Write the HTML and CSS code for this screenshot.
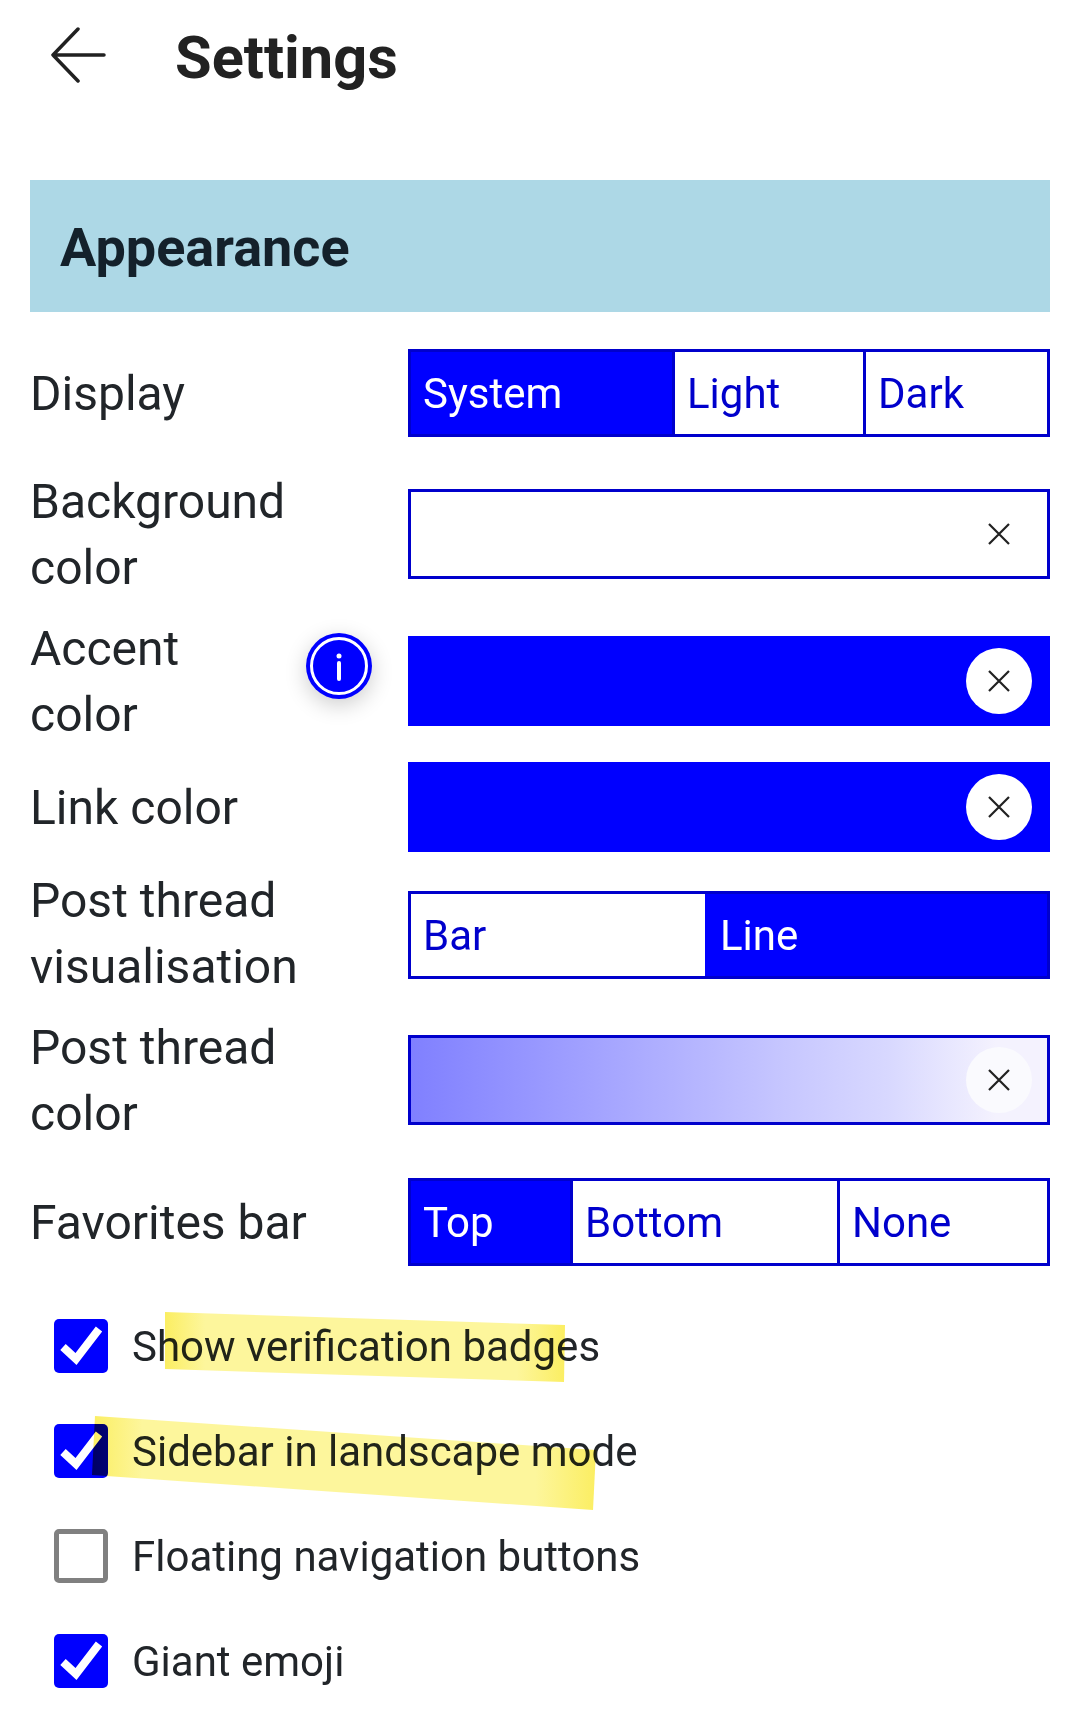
FILE: index.html
```html
<!DOCTYPE html>
<html lang="en">
<head>
    <meta charset="UTF-8">
    <meta name="viewport" content="width=device-width, initial-scale=1.0">
    <title>Settings</title>
    <link rel="stylesheet" href="styles.css">
</head>
<body>
    <header class="top-bar">
        <svg class="back-icon" width="58" height="58" viewBox="0 0 58 58">
            <path d="M54 28H3M28 2 3 28l25 26" />
        </svg>
        <h1>Settings</h1>
    </header>

    <h2 class="section-title">Appearance</h2>

    <div class="settings">
        <div class="setting">
            <span class="setting-label">Display</span>
            <div class="segments">
                <button class="segment active seg-system">System</button>
                <button class="segment seg-light">Light</button>
                <button class="segment seg-dark">Dark</button>
            </div>
        </div>
        <div class="setting">
            <span class="setting-label">Background<br>color</span>
            <div class="color-input">
                <span class="clear-button"><svg viewBox="0 0 24 24"><path d="M2 2l20 20M22 2 2 22" /></svg></span>
            </div>
        </div>
        <div class="setting">
            <span class="setting-label">Accent<br>color</span>
            <span class="info-badge">
                <svg viewBox="0 0 66 66">
                    <circle cx="33" cy="33" r="27.5" />
                    <path d="M33 30v16" />
                    <circle class="info-dot" cx="33" cy="23" r="2.5" />
                </svg>
            </span>
            <div class="color-input filled">
                <span class="clear-button"><svg viewBox="0 0 24 24"><path d="M2 2l20 20M22 2 2 22" /></svg></span>
            </div>
        </div>
        <div class="setting">
            <span class="setting-label">Link color</span>
            <div class="color-input filled">
                <span class="clear-button"><svg viewBox="0 0 24 24"><path d="M2 2l20 20M22 2 2 22" /></svg></span>
            </div>
        </div>
        <div class="setting">
            <span class="setting-label">Post thread<br>visualisation</span>
            <div class="segments segments-low">
                <button class="segment seg-bar">Bar</button>
                <button class="segment active seg-line">Line</button>
            </div>
        </div>
        <div class="setting">
            <span class="setting-label">Post thread<br>color</span>
            <div class="color-input faded">
                <span class="clear-button"><svg viewBox="0 0 24 24"><path d="M2 2l20 20M22 2 2 22" /></svg></span>
            </div>
        </div>
        <div class="setting">
            <span class="setting-label">Favorites bar</span>
            <div class="segments">
                <button class="segment active seg-top">Top</button>
                <button class="segment seg-bottom">Bottom</button>
                <button class="segment seg-none">None</button>
            </div>
        </div>
    </div>

    <div class="checks">
        <label class="check-row">
            <span class="check-box checked"><svg viewBox="0 0 54 54"><path d="M9 28l13 12 23-30" /></svg></span>
            Show verification badges
        </label>
        <label class="check-row">
            <span class="check-box checked"><svg viewBox="0 0 54 54"><path d="M9 28l13 12 23-30" /></svg></span>
            Sidebar in landscape mode
        </label>
        <label class="check-row">
            <span class="check-box"></span>
            Floating navigation buttons
        </label>
        <label class="check-row">
            <span class="check-box checked"><svg viewBox="0 0 54 54"><path d="M9 28l13 12 23-30" /></svg></span>
            Giant emoji
        </label>
    </div>

    <!-- marker strokes drawn over the screenshot -->
    <svg class="marker" width="1080" height="1719" viewBox="0 0 1080 1719">
        <defs>
            <linearGradient id="marker-ink" x1="0" x2="1" y1="0" y2="0">
                <stop offset="0" stop-color="#fbee62" />
                <stop offset="0.1" stop-color="#fdf69c" />
                <stop offset="0.88" stop-color="#fdf69c" />
                <stop offset="1" stop-color="#fbee62" />
            </linearGradient>
        </defs>
        <polygon fill="url(#marker-ink)" points="165,1312 565,1325 564,1382 165,1369" />
        <polygon fill="url(#marker-ink)" points="95,1416 596,1450 593,1510 92,1475" />
    </svg>
</body>
</html>
```

FILE: styles.css
```css
:root {
    --blue: #0000ff;
    --blue-line: #0000cc;
    --text: #212529;
}

* {
    box-sizing: border-box;
}

body {
    font-family: Roboto, "Liberation Sans", sans-serif;
    background-color: #fff;
    color: var(--text);
    margin: 0;
    padding: 0 30px;
    height: 1719px;
    overflow: hidden;
    position: relative;
}

.top-bar {
    display: flex;
    align-items: center;
    height: 112px;
    padding-left: 20px;
    gap: 67px;
}

.back-icon path {
    fill: none;
    stroke: #212121;
    stroke-width: 3.5;
    stroke-linecap: round;
    stroke-linejoin: round;
}

h1 {
    font-size: 59.5px;
    font-weight: 700;
    margin: 3px 0 0;
    color: #222;
}

.section-title {
    font-size: 54px;
    font-weight: 700;
    margin: 68px 0 0;
    height: 132px;
    line-height: 136px;
    padding-left: 30px;
    background-color: #add8e6;
    color: #14212b;
}

.settings {
    display: flex;
    flex-direction: column;
    gap: 15px;
    margin-top: 20px;
}

.setting {
    display: flex;
    align-items: center;
    justify-content: space-between;
    min-height: 90px;
}

.setting-label {
    font-size: 48px;
    line-height: 66px;
    padding-top: 1px;
    margin: 0 auto -1px 0;
}

.info-badge {
    width: 66px;
    height: 66px;
    border-radius: 50%;
    background: var(--blue);
    box-shadow: 0 6px 22px rgba(0, 0, 0, 0.2);
    margin-right: 36px;
    margin-bottom: 30px;
}

.info-badge svg {
    display: block;
}

.info-badge circle {
    fill: none;
    stroke: #fff;
    stroke-width: 3;
}

.info-badge path {
    stroke: #fff;
    stroke-width: 4;
    stroke-linecap: round;
}

.info-badge .info-dot {
    fill: #fff;
    stroke: none;
}

.segments {
    display: flex;
    width: 642px;
    height: 88px;
    margin: 17px 0 16px;
    border: 3px solid var(--blue-line);
}

.segments-low {
    margin-top: 20px;
}

.segment {
    font-family: Roboto, "Liberation Sans", sans-serif;
    font-size: 42px;
    text-align: left;
    padding: 0 0 0 12px;
    background: #fff;
    color: var(--blue-line);
    border: none;
    border-left: 3px solid var(--blue-line);
}

.segment:first-child {
    border-left: none;
}

.segment.active {
    background: var(--blue);
    color: #fff;
    border-color: var(--blue);
}

.seg-system { width: 261px; }
.seg-light { width: 191px; }
.seg-dark { width: 184px; }
.seg-bar { width: 294px; }
.seg-line { width: 342px; }
.seg-top { width: 159px; }
.seg-bottom { width: 267px; }
.seg-none { width: 210px; }

.color-input {
    display: flex;
    align-items: center;
    justify-content: flex-end;
    width: 642px;
    height: 90px;
    padding-right: 15px;
    border: 3px solid var(--blue-line);
    background: #fff;
}

.color-input.filled {
    background: var(--blue);
    border-color: var(--blue);
}

.color-input.faded {
    background: linear-gradient(to right, #8080ff, #c8c8ff 60%, #d8d8ff 75%, #f4f2fe 92%);
}

.clear-button {
    display: flex;
    align-items: center;
    justify-content: center;
    width: 66px;
    height: 66px;
    border-radius: 50%;
}

.filled .clear-button {
    background: #fff;
}

.faded .clear-button {
    background: #fafafe;
}

.clear-button svg {
    width: 24px;
    height: 24px;
}

.clear-button path {
    fill: none;
    stroke: #212121;
    stroke-width: 2.2;
}

.checks {
    display: flex;
    flex-direction: column;
    gap: 51px;
    margin: 37px 0 0 24px;
}

.check-row {
    display: flex;
    align-items: center;
    gap: 24px;
    height: 54px;
    font-size: 42px;
}

.check-box {
    width: 54px;
    height: 54px;
    border-radius: 5px;
    border: 5px solid #808080;
    flex-shrink: 0;
}

.check-box.checked {
    background: var(--blue);
    border: none;
}

.check-box svg {
    display: block;
}

.check-box path {
    fill: none;
    stroke: #fff;
    stroke-width: 8;
}

.marker {
    position: absolute;
    top: 0;
    left: 0;
    mix-blend-mode: multiply;
    pointer-events: none;
}
```
